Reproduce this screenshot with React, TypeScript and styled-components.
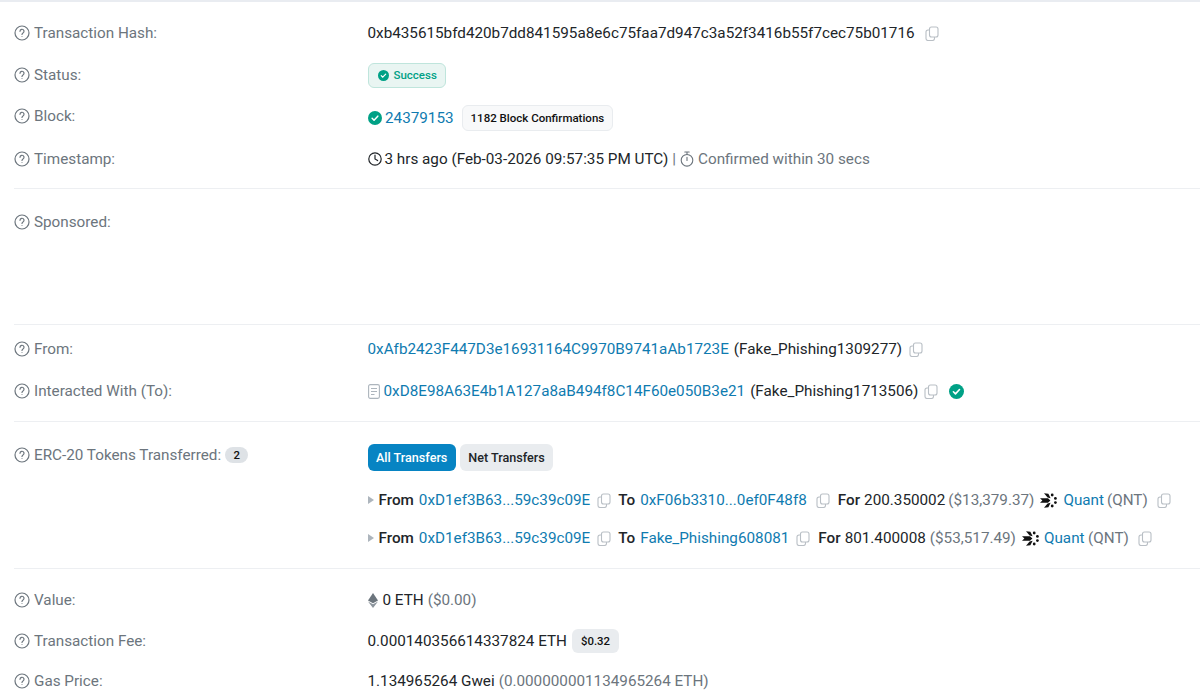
import React from 'react';
import styled, { createGlobalStyle } from 'styled-components';

const GlobalStyle = createGlobalStyle`
  html, body {
    margin: 0;
    padding: 0;
    background: #fff;
    overflow: hidden;
  }
  body {
    font-family: Roboto, "Liberation Sans", sans-serif;
    font-size: 15.25px;
    color: #212529;
  }
`;

const Page = styled.div`
  width: 1200px;
  height: 700px;
  overflow: hidden;
  border-top: 2px solid #e9ecf1;
  box-sizing: border-box;
  padding-left: 14px;
`;

const Section = styled.section<{ $top: number; $bottom: number; $last?: boolean }>`
  padding: ${(p) => p.$top}px 0 ${(p) => p.$bottom}px;
  border-bottom: ${(p) => (p.$last ? 'none' : '1px solid #edeff2')};
`;

const Row = styled.div<{ $h?: number }>`
  display: grid;
  grid-template-columns: 353.5px 1fr;
  align-items: center;
  height: ${(p) => p.$h ?? 42}px;
`;

const Label = styled.div<{ $nudge?: number }>`
  display: flex;
  align-items: center;
  gap: 4px;
  color: #6c757d;
  white-space: nowrap;
  padding-bottom: ${(p) => p.$nudge ?? 0}px;
`;

const Value = styled.div<{ $nudge?: number }>`
  display: flex;
  align-items: center;
  white-space: nowrap;
  padding-top: ${(p) => p.$nudge ?? 0}px;
`;

const Link = styled.a<{ $left?: number }>`
  color: #0f7bb0;
  text-decoration: none;
  margin-left: ${(p) => p.$left ?? 0}px;
`;

const Muted = styled.span<{ $left?: number }>`
  color: #6c757d;
  margin-left: ${(p) => p.$left ?? 0}px;
`;

const Strong = styled.span<{ $left?: number }>`
  font-weight: 500;
  color: #212529;
  margin-left: ${(p) => p.$left ?? 0}px;
`;

const Plain = styled.span<{ $left?: number }>`
  margin-left: ${(p) => p.$left ?? 0}px;
`;

const StatusPill = styled.span`
  display: inline-flex;
  align-items: center;
  gap: 5px;
  height: 25px;
  box-sizing: border-box;
  padding: 0 8px 0 9px;
  border: 1px solid #bfe5dc;
  border-radius: 6px;
  background: #e9f5f2;
  color: #00a186;
  font-size: 11.5px;
  font-weight: 500;
`;

const GreyBadge = styled.span<{ $left: number }>`
  display: inline-flex;
  align-items: center;
  height: 26px;
  box-sizing: border-box;
  margin-left: ${(p) => p.$left}px;
  padding: 0 8px;
  border: 1px solid #e9ecef;
  border-radius: 6px;
  background: #f8f9fa;
  color: #111;
  font-size: 11.5px;
  font-weight: 500;
`;

const FeeBadge = styled.span`
  display: inline-flex;
  align-items: center;
  height: 24px;
  margin-left: 5px;
  padding: 0 9px;
  border-radius: 6px;
  background: #e9ecef;
  color: #111;
  font-size: 11.4px;
  font-weight: 500;
`;

const CountBadge = styled.span`
  display: inline-flex;
  align-items: center;
  justify-content: center;
  width: 23px;
  height: 16px;
  border-radius: 8px;
  background: #dee2e6;
  color: #111;
  font-size: 11.4px;
  font-weight: 500;
`;

const Tabs = styled.div`
  display: flex;
  gap: 4px;
`;

const Tab = styled.button<{ $active?: boolean }>`
  height: 27px;
  padding: 0 8.5px;
  border: none;
  border-radius: 6px;
  font: 500 12.6px Roboto, sans-serif;
  background: ${(p) => (p.$active ? '#0784c3' : '#e9ecef')};
  color: ${(p) => (p.$active ? '#fff' : '#212529')};
`;

const TransferList = styled.div`
  margin-top: 10px;
  display: flex;
  flex-direction: column;
`;

const TransferRow = styled(Value)`
  height: 38px;
`;

const Caret = styled.span`
  width: 0;
  height: 0;
  margin-right: 5px;
  border-top: 4px solid transparent;
  border-bottom: 4px solid transparent;
  border-left: 6px solid #adb5bd;
`;

const TopAligned = styled.div`
  display: grid;
  grid-template-columns: 353.5px 1fr;
`;

const TopLabel = styled(Label)`
  height: 22px;
`;

const Icon = styled.svg<{ $left?: number; $right?: number }>`
  flex: none;
  margin-left: ${(p) => p.$left ?? 0}px;
  margin-right: ${(p) => p.$right ?? 0}px;
`;

const HelpIcon = () => (
  <Icon width="16" height="16" viewBox="0 0 16 16" fill="none" stroke="#6c757d" strokeWidth="1.2">
    <circle cx="8" cy="8" r="7" />
    <path d="M6 6.3a2 2 0 1 1 3 1.7c-.7.4-1 .8-1 1.5" strokeLinecap="round" />
    <circle cx="8" cy="11.6" r=".5" fill="#6c757d" stroke="none" />
  </Icon>
);

const CopyIcon = ({ left = 0 }: { left?: number }) => (
  <Icon $left={left} width="14" height="15" viewBox="0 0 14 15" fill="none" stroke="#b9bfc5" strokeWidth="1.1">
    <rect x="4.5" y="1" width="8.5" height="10" rx="2" />
    <path d="M4.5 4H3a2 2 0 0 0-2 2v6.5a2 2 0 0 0 2 2h4.5a2 2 0 0 0 2-2V11" />
  </Icon>
);

const CheckIcon = ({ size, left = 0, right = 0 }: { size: number; left?: number; right?: number }) => (
  <Icon $left={left} $right={right} width={size} height={size} viewBox="0 0 16 16">
    <circle cx="8" cy="8" r="8" fill="#00a186" />
    <path d="M4.7 8.3l2.2 2.2 4.3-4.6" fill="none" stroke="#fff" strokeWidth="1.7" strokeLinecap="round" strokeLinejoin="round" />
  </Icon>
);

const ClockIcon = () => (
  <Icon $right={3} width="14" height="14" viewBox="0 0 14 14" fill="none" stroke="#212529" strokeWidth="1.2">
    <circle cx="7" cy="7" r="6.2" />
    <path d="M7 3.2V7l2.6 1.6" strokeLinecap="round" />
  </Icon>
);

const StopwatchIcon = () => (
  <Icon $left={4} $right={4} width="14" height="16" viewBox="0 0 14 16" fill="none" stroke="#6c757d" strokeWidth="1.1">
    <circle cx="7" cy="9.3" r="5.8" />
    <path d="M4.8 1h4.4M7 1v2.5M7 6.3v3.2" strokeLinecap="round" />
  </Icon>
);

const ContractIcon = () => (
  <Icon $right={4} width="12" height="15" viewBox="0 0 12 15" fill="none" stroke="#adb5bd" strokeWidth="1.1">
    <rect x=".6" y=".6" width="10.8" height="13.8" rx="1.6" />
    <path d="M3 4.5h6M3 7.5h6M3 10.5h3.5" />
  </Icon>
);

const EthIcon = () => (
  <Icon $right={5} width="10" height="15" viewBox="0 0 10 15">
    <path d="M5 0l5 7.4-5 2.9-5-2.9z" fill="#6c757d" />
    <path d="M5 11.3l5-2.9L5 15 0 8.4z" fill="#8c959d" />
  </Icon>
);

const QuantIcon = ({ left }: { left: number }) => (
  <Icon $left={left} width="17" height="17" viewBox="0 0 17 17" fill="#111">
    <path d="M0 6.2h8l2.4 2.3-2.4 2.3H0l2.4-2.3z" />
    <path d="M4 1.2l4.4.6 2.2 4.4-3-.6z" />
    <path d="M4 15.8l4.4-.6 2.2-4.4-3 .6z" />
    <circle cx="12.2" cy="3" r="1.4" />
    <circle cx="12.2" cy="14" r="1.4" />
    <circle cx="15.4" cy="6.4" r="1.4" />
    <circle cx="15.4" cy="10.6" r="1.4" />
  </Icon>
);

const Field = ({ label, h, nudge, children }: { label: string; h?: number; nudge?: number; children?: React.ReactNode }) => (
  <Row $h={h}>
    <Label $nudge={nudge}>
      <HelpIcon />
      {label}
    </Label>
    <Value $nudge={nudge}>{children}</Value>
  </Row>
);

const App = () => (
  <Page>
    <GlobalStyle />
    <Section $top={10} $bottom={8}>
      <Field label="Transaction Hash:">
        0xb435615bfd420b7dd841595a8e6c75faa7d947c3a52f3416b55f7cec75b01716
        <CopyIcon left={10.5} />
      </Field>
      <Field label="Status:">
        <StatusPill>
          <CheckIcon size={11} />
          Success
        </StatusPill>
      </Field>
      <Field label="Block:" nudge={2}>
        <CheckIcon size={14} right={3.5} />
        <Link>24379153</Link>
        <GreyBadge $left={8}>1182 Block Confirmations</GreyBadge>
      </Field>
      <Field label="Timestamp:">
        <ClockIcon />
        3 hrs ago (Feb-03-2026 09:57:35 PM UTC)
        <Muted $left={4}>|</Muted>
        <StopwatchIcon />
        <Muted>Confirmed within 30 secs</Muted>
      </Field>
    </Section>

    <Section $top={12} $bottom={81}>
      <Field label="Sponsored:" />
    </Section>

    <Section $top={3} $bottom={9}>
      <Field label="From:">
        <Link>0xAfb2423F447D3e16931164C9970B9741aAb1723E</Link>
        <Plain $left={5}>(Fake_Phishing1309277)</Plain>
        <CopyIcon left={7} />
      </Field>
      <Field label="Interacted With (To):">
        <ContractIcon />
        <Link>0xD8E98A63E4b1A127a8aB494f8C14F60e050B3e21</Link>
        <Plain $left={5}>(Fake_Phishing1713506)</Plain>
        <CopyIcon left={6} />
        <CheckIcon size={15} left={11} />
      </Field>
    </Section>

    <Section $top={22} $bottom={11}>
      <TopAligned>
        <TopLabel>
          <HelpIcon />
          ERC-20 Tokens Transferred:
          <CountBadge>2</CountBadge>
        </TopLabel>
        <div>
          <Tabs>
            <Tab $active>All Transfers</Tab>
            <Tab>Net Transfers</Tab>
          </Tabs>
          <TransferList>
            <TransferRow>
              <Caret />
              <Strong>From</Strong>
              <Link $left={5}>0xD1ef3B63...59c39c09E</Link>
              <CopyIcon left={7} />
              <Strong $left={7}>To</Strong>
              <Link $left={5}>0xF06b3310...0ef0F48f8</Link>
              <CopyIcon left={9} />
              <Strong $left={8}>For</Strong>
              <Plain $left={4}>200.350002</Plain>
              <Muted $left={3}>($13,379.37)</Muted>
              <QuantIcon left={6} />
              <Link $left={6}>Quant</Link>
              <Muted $left={3}>(QNT)</Muted>
              <CopyIcon left={9} />
            </TransferRow>
            <TransferRow>
              <Caret />
              <Strong>From</Strong>
              <Link $left={5}>0xD1ef3B63...59c39c09E</Link>
              <CopyIcon left={7} />
              <Strong $left={7}>To</Strong>
              <Link $left={5}>Fake_Phishing608081</Link>
              <CopyIcon left={7} />
              <Strong $left={8}>For</Strong>
              <Plain $left={4}>801.400008</Plain>
              <Muted $left={4}>($53,517.49)</Muted>
              <QuantIcon left={6} />
              <Link $left={5}>Quant</Link>
              <Muted $left={3.5}>(QNT)</Muted>
              <CopyIcon left={9} />
            </TransferRow>
          </TransferList>
        </div>
      </TopAligned>
    </Section>

    <Section $top={10} $bottom={0} $last>
      <Field label="Value:">
        <EthIcon />
        0 ETH
        <Muted $left={4}>($0.00)</Muted>
      </Field>
      <Field label="Transaction Fee:" h={40}>
        0.000140356614337824 ETH
        <FeeBadge>$0.32</FeeBadge>
      </Field>
      <Field label="Gas Price:" h={40}>
        1.134965264 Gwei
        <Muted $left={4}>(0.000000001134965264 ETH)</Muted>
      </Field>
    </Section>
  </Page>
);

export default App;
